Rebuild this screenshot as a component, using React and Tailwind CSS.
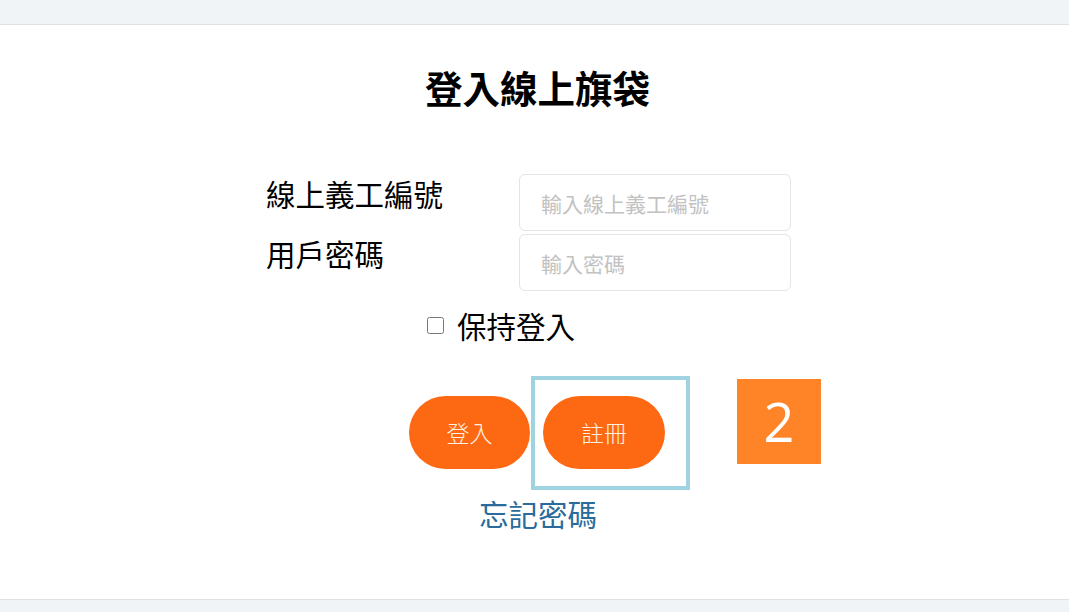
import React, { useState } from 'react';

const Field = ({ label, placeholder, type = 'text' }) => {
  return (
    <div className="flex items-start">
      <label className="w-[253px] mt-[4px] text-[29.5px] leading-[30px] text-black">{label}</label>
      <input
        type={type}
        placeholder={placeholder}
        className="w-[272px] h-[57px] rounded-md border border-[#e4e4e4] px-[21px] text-[21px] text-gray-700 outline-none placeholder:text-[#c2c2c2]"
      />
    </div>
  );
};

const App = () => {
  const [remember, setRemember] = useState(false);

  return (
    <div className="w-full h-[612px] bg-white font-['Noto_Sans_CJK_TC','Noto_Sans_CJK_SC',sans-serif]">
      {/* top bar */}
      <div className="h-[25px] bg-[#f0f4f7] border-b border-[#dde2e7]" />

      <main className="h-[574px]">
        <h1 className="pt-[43px] pl-[6px] text-center text-[37.5px] leading-[37px] font-bold text-black">登入線上旗袋</h1>

        <div className="mt-[69px] ml-[266px] flex flex-col gap-[3px]">
          <Field label="線上義工編號" placeholder="輸入線上義工編號" />
          <Field label="用戶密碼" placeholder="輸入密碼" type="password" />
        </div>

        <label className="mt-[19px] ml-[427px] flex items-center w-fit cursor-pointer">
          <input
            type="checkbox"
            checked={remember}
            onChange={(e) => setRemember(e.target.checked)}
            className="w-[17px] h-[17px] mr-[13px]"
          />
          <span className="text-[29.5px] leading-[30px] text-black">保持登入</span>
        </label>

        {/* buttons */}
        <div className="relative mt-[56px] ml-[409px] flex gap-[13px]">
          <button className="w-[121px] h-[73px] rounded-full bg-[#fd6912] text-[23px] font-light text-[#fff1e2]">登入</button>
          <button className="w-[122px] h-[73px] rounded-full bg-[#fd6912] text-[23px] font-light text-[#fff1e2]">註冊</button>
          {/* highlight annotation */}
          <div className="absolute left-[122px] top-[-20px] w-[159px] h-[114px] border-4 border-[#9fd3e2] pointer-events-none" />
          <div className="absolute left-[328px] top-[-17px] w-[84px] h-[85px] bg-[#ff8427] flex items-center justify-center text-white text-[54px] font-['Open_Sans',sans-serif]">
            2
          </div>
        </div>

        <a href="#" className="block w-fit mt-[29px] ml-[479px] text-[29.5px] leading-[30px] text-[#2b6b9b]">忘記密碼</a>
      </main>

      {/* bottom bar */}
      <div className="h-[13px] bg-[#f0f4f7] border-t border-[#dde2e7]" />
    </div>
  );
};

export default App;
